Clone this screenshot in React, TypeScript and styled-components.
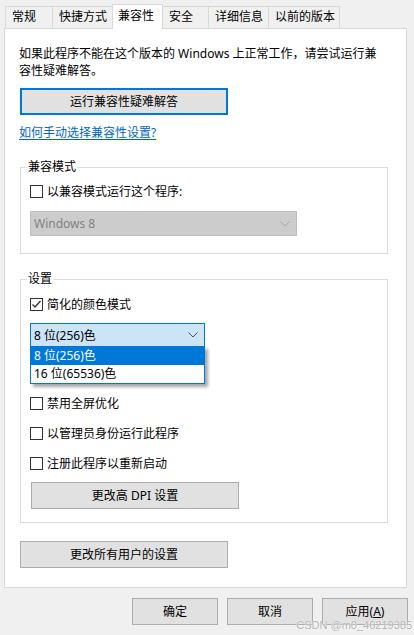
import React from "react";
import styled, { createGlobalStyle } from "styled-components";

const Global = createGlobalStyle`
  html, body { margin: 0; padding: 0; background: #f0f0f0; }
  body {
    font-family: "Noto Sans", "Noto Sans CJK SC", sans-serif;
    font-size: 12px;
    color: #000;
  }
  * { box-sizing: border-box; }
`;

const Page = styled.div`
  position: relative;
  width: 414px;
  height: 635px;
  padding: 4px 0 0 4px;
  background: #f0f0f0;
  overflow: hidden;
`;

const TabBar = styled.div`
  position: relative;
  z-index: 1;
  display: flex;
  align-items: flex-end;
  height: 24px;
  padding-left: 1px;
`;

const Tab = styled.div<{ $w: number; $active?: boolean }>`
  position: relative;
  z-index: ${(p) => (p.$active ? 2 : 1)};
  width: ${(p) => p.$w}px;
  height: ${(p) => (p.$active ? 25 : 22)}px;
  margin-right: -1px;
  margin-bottom: ${(p) => (p.$active ? -1 : 0)}px;
  padding-left: ${(p) => (p.$active ? 5 : 6)}px;
  border: 1px solid #d9d9d9;
  border-bottom: none;
  background: ${(p) => (p.$active ? "#fff" : "#f0f0f0")};
  line-height: ${(p) => (p.$active ? 21 : 20)}px;
  white-space: nowrap;
`;

const Panel = styled.div`
  width: 403px;
  padding: 16px 0 19px 15px;
  border: 1px solid #d9d9d9;
  background: #fff;
`;

const Intro = styled.p`
  margin: 0 0 0 -1px;
  line-height: 17px;
`;

const Button = styled.button<{ $w: number; $focused?: boolean }>`
  display: block;
  width: ${(p) => p.$w}px;
  height: 27px;
  padding: 0;
  border: ${(p) => (p.$focused ? "2px solid #0078d7" : "1px solid #adadad")};
  background: #e1e1e1;
  font: inherit;
  color: #000;
  line-height: 17px;
  text-align: center;
  cursor: default;
`;

const PrimaryButton = styled(Button)`
  margin-top: 9px;
`;

const HelpLink = styled.a`
  display: inline-block;
  margin: 9px 0 0 -1px;
  color: #0066cc;
  line-height: 17px;
  text-decoration: underline;
  text-underline-offset: 2px;
`;

const Group = styled.fieldset<{ $top: number; $bottom: number }>`
  width: 368px;
  min-width: 0;
  margin: ${(p) => p.$top}px 0 0 0;
  padding: 0 9px ${(p) => p.$bottom}px 9px;
  border: 1px solid #dcdcdc;
`;

const GroupTitle = styled.legend`
  margin-left: -3px;
  padding: 0 1px;
  line-height: 18px;
`;

const CheckRow = styled.label<{ $top: number }>`
  display: flex;
  align-items: center;
  gap: 4px;
  height: 17px;
  margin-top: ${(p) => p.$top}px;
  line-height: 17px;
  white-space: nowrap;
`;

const Box = styled.span`
  display: flex;
  align-items: center;
  justify-content: center;
  flex: none;
  width: 13px;
  height: 13px;
  border: 1px solid #333;
  background: #fff;
`;

const Combo = styled.div<{ $w: number; $h: number; $top: number; $open?: boolean }>`
  position: relative;
  display: flex;
  align-items: center;
  justify-content: space-between;
  width: ${(p) => p.$w}px;
  height: ${(p) => p.$h}px;
  margin-top: ${(p) => p.$top}px;
  padding: 0 6px 0 3px;
  border: 1px solid ${(p) => (p.$open ? "#0078d7" : "#bfbfbf")};
  background: ${(p) => (p.$open ? "#cce4f7" : "#cccccc")};
  color: ${(p) => (p.$open ? "#000" : "#838383")};
  line-height: 17px;
  z-index: ${(p) => (p.$open ? 3 : 0)};
`;

const ComboList = styled.ul`
  position: absolute;
  left: -1px;
  top: 100%;
  width: 175px;
  margin: 0;
  padding: 0;
  list-style: none;
  border: 1px solid #0078d7;
  background: #fff;
  box-shadow: 3px 3px 3px rgba(0, 0, 0, 0.35);
`;

const ComboItem = styled.li<{ $selected?: boolean }>`
  height: 18px;
  padding-left: 3px;
  line-height: 18px;
  background: ${(p) => (p.$selected ? "#0078d7" : "#fff")};
  color: ${(p) => (p.$selected ? "#fff" : "#000")};
  white-space: nowrap;
`;

/* row hidden beneath the open drop-down list */
const CoveredRow = styled.div`
  height: 17px;
  margin-top: 18px;
`;

const DpiButton = styled(Button)`
  margin: 10px 0 0 1px;
`;

const AllUsersButton = styled(Button)`
  margin-top: 18px;
`;

const Footer = styled.div`
  display: flex;
  justify-content: flex-end;
  gap: 9px;
  margin-top: 10px;
  padding-right: 6px;
`;

const Watermark = styled.div`
  position: absolute;
  right: 2px;
  bottom: 4px;
  font-family: "Liberation Sans", sans-serif;
  font-size: 11px;
  line-height: 12px;
  color: rgba(150, 150, 150, 0.75);
  text-shadow: 0 0 1px #fff, 0 0 1px #fff;
  pointer-events: none;
`;

const Chevron = ({ color }: { color: string }) => (
  <svg width="10" height="6" viewBox="0 0 10 6">
    <path d="M0.5 0.5 L5 5 L9.5 0.5" fill="none" stroke={color} strokeWidth="1" />
  </svg>
);

const Check = ({ checked }: { checked?: boolean }) => (
  <Box>
    {checked && (
      <svg width="11" height="11" viewBox="0 0 11 11">
        <path d="M1.5 5.5 L4 8 L9.5 2" fill="none" stroke="#333" strokeWidth="1.3" />
      </svg>
    )}
  </Box>
);

const tabs: { label: string; w: number; active?: boolean }[] = [
  { label: "常规", w: 48 },
  { label: "快捷方式", w: 61 },
  { label: "兼容性", w: 51, active: true },
  { label: "安全", w: 47 },
  { label: "详细信息", w: 61 },
  { label: "以前的版本", w: 72 },
];

export default function App() {
  return (
    <Page>
      <Global />
      <TabBar>
        {tabs.map((t) => (
          <Tab key={t.label} $w={t.w} $active={t.active}>
            {t.label}
          </Tab>
        ))}
      </TabBar>
      <Panel>
        <Intro>
          如果此程序不能在这个版本的 Windows 上正常工作，请尝试运行兼
          <br />
          容性疑难解答。
        </Intro>
        <PrimaryButton $w={208} $focused>
          运行兼容性疑难解答
        </PrimaryButton>
        <HelpLink href="#">如何手动选择兼容性设置?</HelpLink>

        <Group $top={17} $bottom={17}>
          <GroupTitle>兼容模式</GroupTitle>
          <CheckRow $top={7}>
            <Check />
            以兼容模式运行这个程序:
          </CheckRow>
          <Combo $w={267} $h={25} $top={11}>
            <span>Windows 8</span>
            <Chevron color="#a8a8a8" />
          </Combo>
        </Group>

        <Group $top={16} $bottom={13}>
          <GroupTitle>设置</GroupTitle>
          <CheckRow $top={8}>
            <Check checked />
            简化的颜色模式
          </CheckRow>
          <Combo $w={175} $h={24} $top={10} $open>
            <span>8 位(256)色</span>
            <Chevron color="#555" />
            <ComboList>
              <ComboItem $selected>8 位(256)色</ComboItem>
              <ComboItem>16 位(65536)色</ComboItem>
            </ComboList>
          </Combo>
          <CoveredRow />
          <CheckRow $top={13}>
            <Check />
            禁用全屏优化
          </CheckRow>
          <CheckRow $top={13}>
            <Check />
            以管理员身份运行此程序
          </CheckRow>
          <CheckRow $top={13}>
            <Check />
            注册此程序以重新启动
          </CheckRow>
          <DpiButton $w={208}>更改高 DPI 设置</DpiButton>
        </Group>

        <AllUsersButton $w={208}>更改所有用户的设置</AllUsersButton>
      </Panel>
      <Footer>
        <Button $w={86}>确定</Button>
        <Button $w={86}>取消</Button>
        <Button $w={86}>
          应用(<u>A</u>)
        </Button>
      </Footer>
      <Watermark>CSDN @m0_46219385</Watermark>
    </Page>
  );
}
